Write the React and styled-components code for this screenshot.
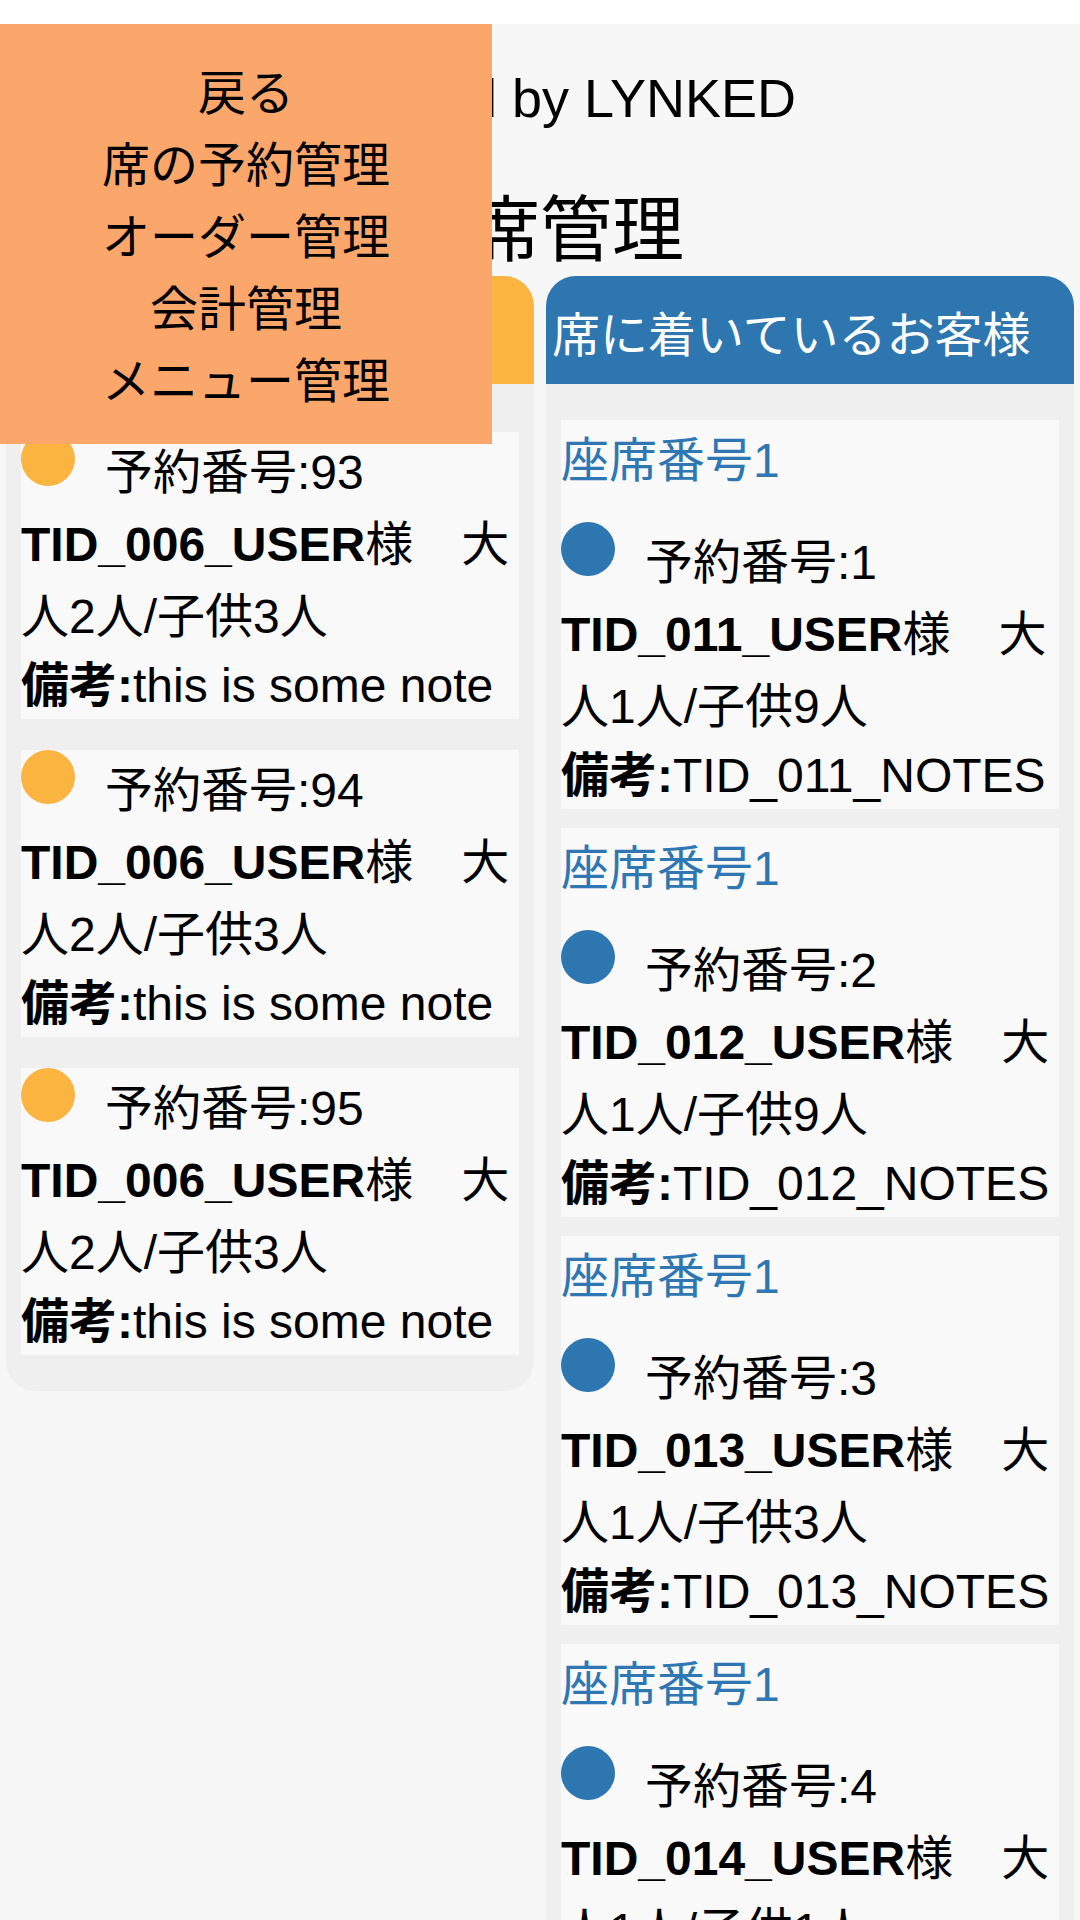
import React from "react";
import styled, { createGlobalStyle } from "styled-components";

const GlobalStyle = createGlobalStyle`
  html, body {
    margin: 0;
    padding: 0;
    background: #ffffff;
  }
  body {
    font-family: "Liberation Sans", "Noto Sans CJK JP", sans-serif;
    font-size: 48px;
    line-height: 72px;
    color: #000;
  }
  * { box-sizing: border-box; }
`;

const Page = styled.div`
  position: relative;
  margin-top: 24px;
  min-height: 1896px;
  background: #f7f7f7;
  padding-bottom: 40px;
`;

const Header = styled.header`
  padding-top: 38px;
  text-align: center;
  font-size: 54px;
  line-height: 72px;
  white-space: nowrap;
`;

const Title = styled.h1`
  margin: 54px 0 0;
  font-size: 72px;
  line-height: 84px;
  font-weight: normal;
  text-align: center;
`;

const Columns = styled.div`
  margin-top: 4px;
  padding: 0 6px;
  display: grid;
  grid-template-columns: 1fr 1fr;
  gap: 12px;
  align-items: start;
`;

const Panel = styled.section`
  display: flex;
  flex-direction: column;
`;

const PanelHeader = styled.div`
  background: ${(p) => p.$color};
  color: #fff;
  border-radius: 30px 30px 0 0;
  padding: 24px 6px 12px;
  line-height: 72px;
  white-space: nowrap;
  overflow: hidden;
`;

const PanelBody = styled.div`
  background: #efefef;
  display: flex;
  flex-direction: column;
  gap: ${(p) => p.$gap}px;
  padding: ${(p) => p.$top}px 15px ${(p) => p.$bottom}px;
  border-radius: ${(p) => (p.$rounded ? "0 0 30px 30px" : "0")};
`;

const Card = styled.div`
  background: #f9f9f9;
`;

const SeatTitle = styled.div`
  color: #2e77b3;
  padding-top: 5px;
  line-height: 72px;
  margin-bottom: 25px;
`;

const Reservation = styled.div`
  padding-top: 5px;
`;

const Row = styled.div`
  display: flex;
  align-items: flex-start;
`;

const Dot = styled.span`
  flex: none;
  width: 54px;
  height: 54px;
  margin-top: -5px;
  margin-right: 30px;
  border-radius: 50%;
  background: ${(p) => p.$color};
`;

const Line = styled.div`
  line-height: 72px;
`;

const Note = styled.div`
  line-height: 66px;
  white-space: nowrap;
`;

const Menu = styled.nav`
  position: absolute;
  top: 0;
  left: 0;
  width: 492px;
  height: 420px;
  background: #fba66a;
  padding: 34px 0 26px;
  display: flex;
  flex-direction: column;
  align-items: center;
  z-index: 10;
`;

const MenuItem = styled.a`
  color: #000;
  text-decoration: none;
  line-height: 72px;
  white-space: nowrap;
`;

const YELLOW = "#fbb440";
const BLUE = "#2e76b0";

const waiting = [
  { no: 93, name: "TID_006_USER", adults: 2, kids: 3, note: "this is some note" },
  { no: 94, name: "TID_006_USER", adults: 2, kids: 3, note: "this is some note" },
  { no: 95, name: "TID_006_USER", adults: 2, kids: 3, note: "this is some note" },
];

const seated = [
  { seat: 1, no: 1, name: "TID_011_USER", adults: 1, kids: 9, note: "TID_011_NOTES" },
  { seat: 1, no: 2, name: "TID_012_USER", adults: 1, kids: 9, note: "TID_012_NOTES" },
  { seat: 1, no: 3, name: "TID_013_USER", adults: 1, kids: 3, note: "TID_013_NOTES" },
  { seat: 1, no: 4, name: "TID_014_USER", adults: 1, kids: 1, note: "TID_014_NOTES" },
];

function ReservationInfo({ r, color }) {
  return (
    <Reservation>
      <Row>
        <Dot $color={color} />
        <Line>予約番号:{r.no}</Line>
      </Row>
      <Line>
        <b>{r.name}</b>様　大人{r.adults}人/子供{r.kids}人
      </Line>
      <Note>
        <b>備考:</b>
        {r.note}
      </Note>
    </Reservation>
  );
}

export default function App() {
  return (
    <>
      <GlobalStyle />
      <Page>
        <Menu>
          <MenuItem href="#">戻る</MenuItem>
          <MenuItem href="#">席の予約管理</MenuItem>
          <MenuItem href="#">オーダー管理</MenuItem>
          <MenuItem href="#">会計管理</MenuItem>
          <MenuItem href="#">メニュー管理</MenuItem>
        </Menu>
        <Header>Powered by LYNKED</Header>
        <Title>座席管理</Title>
        <Columns>
          <Panel>
            <PanelHeader $color={YELLOW}>予約しているお客様</PanelHeader>
            <PanelBody $top={48} $gap={31} $bottom={36} $rounded>
              {waiting.map((r) => (
                <Card key={r.no}>
                  <ReservationInfo r={r} color={YELLOW} />
                </Card>
              ))}
            </PanelBody>
          </Panel>
          <Panel>
            <PanelHeader $color={BLUE}>席に着いているお客様</PanelHeader>
            <PanelBody $top={36} $gap={19} $bottom={36} $rounded>
              {seated.map((r) => (
                <Card key={r.no}>
                  <SeatTitle>座席番号{r.seat}</SeatTitle>
                  <ReservationInfo r={r} color={BLUE} />
                </Card>
              ))}
            </PanelBody>
          </Panel>
        </Columns>
      </Page>
    </>
  );
}
